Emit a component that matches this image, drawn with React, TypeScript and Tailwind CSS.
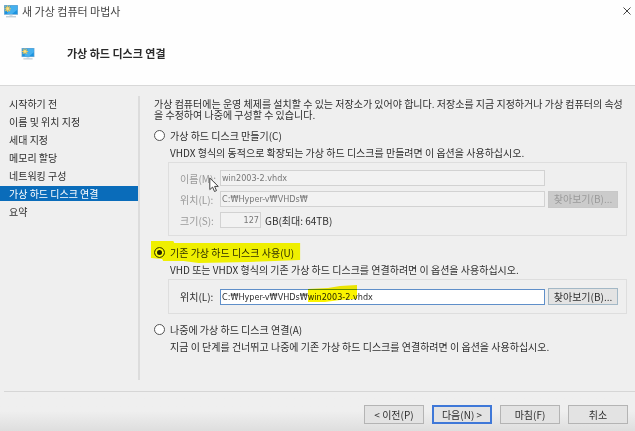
import { useState } from 'react'
import type { ReactNode } from 'react'
import clsx from 'clsx'

const steps = [
  '시작하기 전',
  '이름 및 위치 지정',
  '세대 지정',
  '메모리 할당',
  '네트워킹 구성',
  '가상 하드 디스크 연결',
  '요약',
]

function MonitorIcon({ className }: { className?: string }) {
  return (
    <svg viewBox="0 0 14 13" className={className} aria-hidden="true">
      <rect x="0" y="0" width="14" height="9.8" fill="#7fb0d2" />
      <rect x="0.7" y="0.7" width="12.6" height="8.4" fill="#1c93e0" />
      <path d="M7 .7h6.3v4L8 9.1H3z" fill="#45b0ee" />
      <path d="M3.7.5v6.4M.5 3.7h6.4M1.4 1.4l4.6 4.6M6 1.4 1.4 6" stroke="#ecc95c" strokeWidth="1.1" />
      <circle cx="3.7" cy="3.7" r="1.3" fill="#f7e08a" />
      <path d="M5.5 9.8h3v1.4h-3z" fill="#d3dde3" />
      <path d="M2 11.3h10v1H2z" fill="#a9bcc8" />
    </svg>
  )
}

function MousePointer() {
  return (
    <svg viewBox="0 0 10 16" className="pointer-events-none absolute top-[14px] left-10 h-4 w-[10px]" aria-hidden="true">
      <path
        d="M.8 1v11.6l2.8-2.5 1.9 4.4 2-.9-1.9-4.2h3.7z"
        fill="#fff"
        stroke="#444"
        strokeWidth="1"
        strokeLinejoin="round"
      />
    </svg>
  )
}

function Option({
  id,
  label,
  checked,
  onSelect,
  marked,
}: {
  id: string
  label: string
  checked: boolean
  onSelect: (id: string) => void
  marked?: boolean
}) {
  return (
    <div className="relative flex h-4 w-fit items-center gap-[5px]">
      <input
        type="radio"
        name="disk"
        id={id}
        checked={checked}
        onChange={() => onSelect(id)}
        className="size-[11px] appearance-none rounded-full border border-[#555] bg-white checked:bg-[#222] checked:shadow-[inset_0_0_0_2px_#fff]"
      />
      <label htmlFor={id}>{label}</label>
      {marked && (
        <svg
          viewBox="0 0 148 24"
          preserveAspectRatio="none"
          className="pointer-events-none absolute -inset-x-[3px] -inset-y-1 h-6 w-[calc(100%+10px)] mix-blend-multiply"
          aria-hidden="true"
        >
          <path d="M0 1h22l1 2h124v17l-25 1-25 1-50 1-15-2H12l-1-2-11-1z" fill="#ffff00" />
        </svg>
      )}
    </div>
  )
}

function Group({ children, className }: { children: ReactNode; className?: string }) {
  return <div className={clsx('ml-[14px] border border-[#dedede] pr-2 pl-[11px]', className)}>{children}</div>
}

const field =
  "h-4 min-w-0 border px-px font-['DejaVu_Sans_Condensed','Open_Sans',sans-serif] text-[9px] leading-none disabled:border-[#d2d2d2] disabled:bg-[#f2f2f2] disabled:text-[#777]"
const button = 'flex items-center justify-center border leading-none'
const browse =
  'h-[17px] w-[70px] border-[#a3b8c6] bg-[#e3e3e3] disabled:border-[#c8c8c8] disabled:bg-[#cbcbcb] disabled:text-[#9a9a9a]'
const footerButton = 'h-[19px] w-[60px] bg-[#e3e3e3]'

export default function App() {
  const [disk, setDisk] = useState('existing')

  return (
    <div className="flex min-h-screen flex-col bg-[#efefef] font-['Noto_Sans_CJK_KR',sans-serif] text-[10px] leading-[11px] text-[#2e2e2e]">
      <header className="border-b border-[#d8d8d8] bg-[#fefefe]">
        <div className="flex h-[22px] items-center px-1 text-[11px] text-[#444]">
          <MonitorIcon className="mr-1 h-[13px] w-[14px]" />
          <span>새 가상 컴퓨터 마법사</span>
          <button type="button" aria-label="닫기" className="ml-auto">
            <svg viewBox="0 0 8 8" className="size-2" aria-hidden="true">
              <path d="M.5.5l7 7M7.5.5l-7 7" stroke="#444" strokeWidth="1" />
            </svg>
          </button>
        </div>
        <div className="flex h-[63px] items-center gap-8 pl-[21px]">
          <MonitorIcon className="h-3 w-[14px]" />
          <h1 className="text-[11px] font-bold text-[#2a2a2a]">가상 하드 디스크 연결</h1>
        </div>
      </header>

      <div className="flex flex-1 pt-[10px] pb-[11px]">
        <nav className="w-[140px] shrink-0 border-r-2 border-[#dcdcdc]">
          <ul className="flex flex-col gap-[3px]">
            {steps.map((step, i) => (
              <li key={step}>
                <a
                  href="#"
                  className={clsx('flex h-[15px] items-center pl-[9px]', i === 5 && 'bg-[#0a6cba] text-white')}
                >
                  {step}
                </a>
              </li>
            ))}
          </ul>
        </nav>

        <main className="min-w-0 flex-1 pt-[2px] pr-2 pl-[14px]">
          <p>
            가상 컴퓨터에는 운영 체제를 설치할 수 있는 저장소가 있어야 합니다. 저장소를 지금 지정하거나 가상 컴퓨터의 속성을
            수정하여 나중에 구성할 수 있습니다.
          </p>

          <section className="mt-[7px]">
            <Option id="create" label="가상 하드 디스크 만들기(C)" checked={disk === 'create'} onSelect={setDisk} />
            <p className="mt-1 ml-4">VHDX 형식의 동적으로 확장되는 가상 하드 디스크를 만들려면 이 옵션을 사용하십시오.</p>
            <Group className="relative mt-1 flex flex-col gap-[5px] py-[7px]">
              <div className="flex items-center">
                <label htmlFor="name" className="w-10 shrink-0 text-[#999]">
                  이름(M):
                </label>
                <input id="name" disabled defaultValue="win2003-2.vhdx" className={clsx(field, 'mr-[73px] flex-1')} />
              </div>
              <div className="flex h-4 items-center">
                <label htmlFor="path" className="w-10 shrink-0 text-[#999]">
                  위치(L):
                </label>
                <input id="path" disabled defaultValue="C:₩Hyper-v₩VHDs₩" className={clsx(field, 'mr-[3px] flex-1')} />
                <button type="button" disabled className={clsx(button, browse)}>
                  찾아보기(B)...
                </button>
              </div>
              <div className="flex items-center">
                <label htmlFor="size" className="w-10 shrink-0 text-[#999]">
                  크기(S):
                </label>
                <input id="size" disabled defaultValue="127" className={clsx(field, 'mr-1 w-[41px] text-right')} />
                <span>GB(최대: 64TB)</span>
              </div>
              <MousePointer />
            </Group>
          </section>

          <section className="mt-2">
            <Option
              id="existing"
              label="기존 가상 하드 디스크 사용(U)"
              checked={disk === 'existing'}
              onSelect={setDisk}
              marked
            />
            <p className="mt-1 ml-4">VHD 또는 VHDX 형식의 기존 가상 하드 디스크를 연결하려면 이 옵션을 사용하십시오.</p>
            <Group className="mt-1 flex items-center py-2">
              <label htmlFor="existing-path" className="w-10 shrink-0">
                위치(L):
              </label>
              <div className="relative mr-[3px] flex flex-1">
                <input
                  id="existing-path"
                  defaultValue="C:₩Hyper-v₩VHDs₩win2003-2.vhdx"
                  className={clsx(field, 'flex-1 border-[#5f8fc9] bg-white')}
                />
                <svg
                  viewBox="0 0 50 18"
                  className="pointer-events-none absolute -top-1 left-[88px] h-[18px] w-[50px] mix-blend-multiply"
                  aria-hidden="true"
                >
                  <path d="M0 4l20-1 12-2 17-1v14l-17 1-15 2H0z" fill="#fbf400" />
                </svg>
              </div>
              <button type="button" className={clsx(button, browse)}>
                찾아보기(B)...
              </button>
            </Group>
          </section>

          <section className="mt-[7px]">
            <Option id="later" label="나중에 가상 하드 디스크 연결(A)" checked={disk === 'later'} onSelect={setDisk} />
            <p className="mt-1 ml-4">지금 이 단계를 건너뛰고 나중에 기존 가상 하드 디스크를 연결하려면 이 옵션을 사용하십시오.</p>
          </section>
        </main>
      </div>

      <footer className="bg-linear-to-b from-[#efefef] from-50% to-[#dedede]">
        <div className="ml-1 flex justify-end gap-2 border-t border-[#d6d6d6] pt-[13px] pr-[7px] pb-[7px]">
          <button type="button" className={clsx(button, footerButton, 'border-[#b4b4b4]')}>
            &lt; 이전(P)
          </button>
          <button type="button" className={clsx(button, footerButton, 'border-2 border-[#3f78d8]')}>
            다음(N) &gt;
          </button>
          <button type="button" className={clsx(button, footerButton, 'border-[#b4b4b4]')}>
            마침(F)
          </button>
          <button type="button" className={clsx(button, footerButton, 'border-[#b4b4b4]')}>
            취소
          </button>
        </div>
      </footer>
    </div>
  )
}
